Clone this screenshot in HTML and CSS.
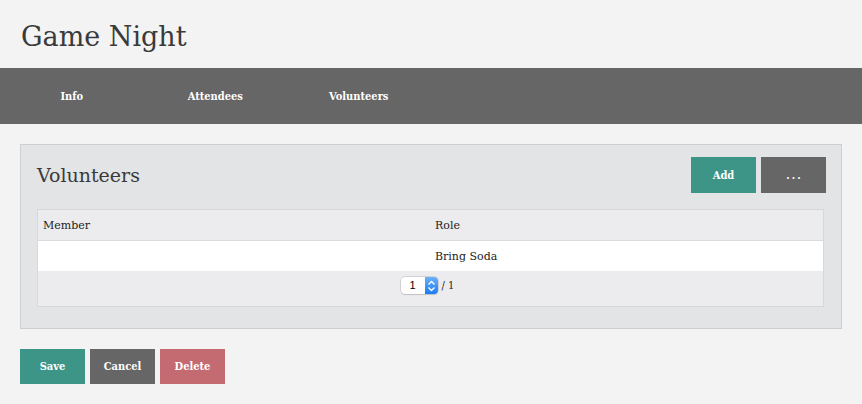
FILE: index.html
```html
<!DOCTYPE html>
<html>
<head>
<meta charset="utf-8">
<link rel="stylesheet" href="styles.css">
</head>
<body>
<h1 class="title">Game Night</h1>
<nav class="nav">
  <a class="nav-item">Info</a>
  <a class="nav-item">Attendees</a>
  <a class="nav-item">Volunteers</a>
</nav>
<section class="panel">
  <div class="panel-head">
    <h2 class="panel-title">Volunteers</h2>
    <div class="actions">
      <button class="btn btn-teal">Add</button>
      <button class="btn btn-grey btn-more">...</button>
    </div>
  </div>
  <div class="table">
    <div class="row head"><div class="cell">Member</div><div class="cell">Role</div></div>
    <div class="row body"><div class="cell"></div><div class="cell">Bring Soda</div></div>
    <div class="pager">
      <span class="select"><span class="sel-val">1</span><span class="sel-arrow"><svg width="9" height="12" viewBox="0 0 9 12"><path d="M1.5 4.5 L4.5 1.5 L7.5 4.5 M1.5 7.5 L4.5 10.5 L7.5 7.5" fill="none" stroke="#fff" stroke-width="1.4"/></svg></span></span>
      <span class="pages">/ 1</span>
    </div>
  </div>
</section>
<div class="footer-actions">
  <button class="btn btn-teal">Save</button>
  <button class="btn btn-grey">Cancel</button>
  <button class="btn btn-red">Delete</button>
</div>
</body>
</html>
```
FILE: styles.css
```css
html, body { margin: 0; padding: 0; }
body {
  background: #f3f3f3;
  font-family: "DejaVu Serif Condensed", "DejaVu Serif", serif;
  color: #333;
  width: 862px;
  height: 404px;
  overflow: hidden;
}
.title {
  margin: 0;
  padding: 20px 21px 0;
  height: 68px;
  box-sizing: border-box;
  font-family: "DejaVu Serif", serif;
  font-size: 27px;
  font-weight: normal;
  line-height: 34px;
  color: #3a3a3a;
}
.nav {
  display: flex;
  background: #666;
  height: 56px;
  align-items: center;
}
.nav-item {
  width: 143.5px;
  text-align: center;
  color: #fff;
  font-size: 11px;
  font-weight: bold;
}
.panel {
  margin: 20px 20px 0;
  background: #e3e4e6;
  border: 1px solid #cfcfd1;
  height: 185px;
  box-sizing: border-box;
  padding: 12px 15px 0 16px;
}
.panel-head {
  display: flex;
  justify-content: space-between;
  align-items: center;
  height: 36px;
}
.panel-title {
  margin: 0;
  font-family: "DejaVu Serif", serif;
  font-size: 19px;
  font-weight: normal;
  color: #3a3a3a;
}
.actions { display: flex; gap: 5px; }
.btn {
  width: 65px;
  height: 36px;
  border: 0;
  padding: 0;
  color: #fff;
  font-family: inherit;
  font-size: 11px;
  font-weight: bold;
}
.btn-more { letter-spacing: 2px; padding-left: 2px; }
.btn-teal { background: #3d9587; }
.btn-grey { background: #666666; }
.btn-red { background: #c46a71; }
.table {
  margin: 16px 2px 0 0;
  border: 1px solid #d8d8da;
  background: #ececee;
}
.row { display: flex; }
.row.head { height: 30px; border-bottom: 1px solid #dcdcde; align-items: center; }
.row.body { height: 30px; background: #fff; align-items: center; }
.cell {
  flex: 1;
  padding: 0 6px 0 5px;
  font-family: "DejaVu Serif", serif;
  font-size: 11px;
  color: #222;
}
.cell + .cell { padding-left: 4px; }
.pager {
  height: 35px;
  display: flex;
  justify-content: center;
  align-items: flex-start;
  padding: 6px 6px 0 0;
  box-sizing: border-box;
  gap: 4px;
  font-size: 11px;
  color: #222;
}
.select {
  display: flex;
  width: 37px;
  height: 17px;
  border-radius: 4px;
  background: #fff;
  box-shadow: 0 0 0 0.5px #b8b8b8, 0 1px 1px rgba(0,0,0,0.15);
  overflow: hidden;
  font-family: "Liberation Sans", sans-serif;
}
.sel-val {
  flex: 1;
  text-align: center;
  line-height: 17px;
  font-size: 11px;
  color: #000;
}
.sel-arrow {
  width: 13px;
  background: linear-gradient(#6cb0fb, #1a7cf5);
  display: flex;
  align-items: center;
  justify-content: center;
}
.pages { line-height: 17px; }
.footer-actions {
  display: flex;
  gap: 5px;
  margin: 20px 20px 0;
}
.footer-actions .btn { height: 35px; }
```
